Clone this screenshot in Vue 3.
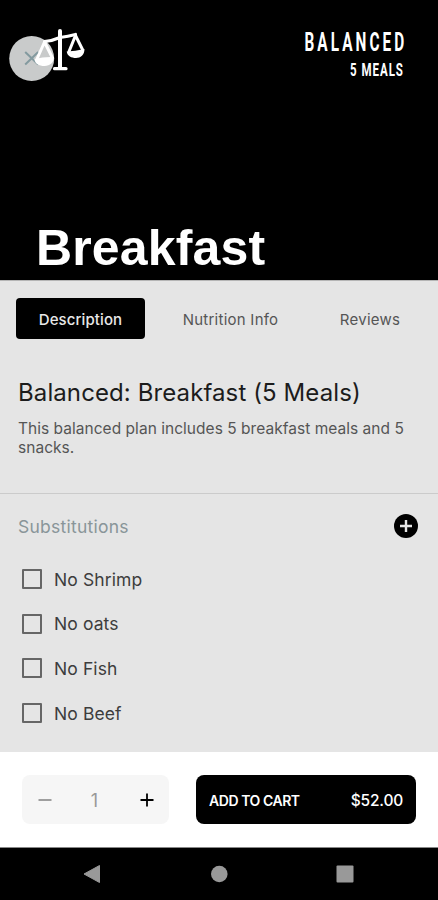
<script setup>
import { ref } from 'vue'

const tabs = ['Description', 'Nutrition Info', 'Reviews']
const activeTab = ref('Description')
const options = ref([
  { label: 'No Shrimp', checked: false },
  { label: 'No oats', checked: false },
  { label: 'No Fish', checked: false },
  { label: 'No Beef', checked: false },
])
const quantity = ref(1)
</script>

<template>
  <main class="screen">
    <header class="hero">
      <div class="hero-top">
        <svg class="brand" width="90" height="66" viewBox="0 0 90 66">
          <circle cx="31.7" cy="38.500" r="22.500" fill="#c9cbcb" />
          <path d="M25.200 32l13 12.500M38.200 32l-13 12.500" stroke="#839a9f" stroke-width="2" fill="none" />
          <g fill="none" stroke="#fff" stroke-width="3" stroke-linecap="round" stroke-linejoin="round">
            <path d="M60 11v37" stroke-width="4" />
            <path d="M54.500 48.700h11.500" stroke-width="3.200" />
            <path d="M44.500 21.500Q52 21 60 17.500Q68 16.500 75.500 14.500" stroke-width="3.200" />
            <path d="M44.500 22l-7.500 17M44.500 22l7.500 15" />
            <path d="M75.500 15.500l-6.500 16M75.500 15.500l7 14" />
          </g>
          <path d="M34.500 39q9.500-2.500 19.500-2c0 5.500-4 9-9.500 9s-10-2.500-10-7z" fill="#fff" />
          <path d="M66.700 31.500q8.500-.5 17.800-2.500c0 6-4 9-8.500 9s-8.800-2-9.300-6.500z" fill="#fff" />
        </svg>
        <div class="plan">
          <span class="plan-name">BALANCED</span>
          <span class="plan-size">5 MEALS</span>
        </div>
      </div>
      <h1>Breakfast</h1>
    </header>

    <section class="details">
      <nav class="tabs">
        <button
          v-for="tab in tabs"
          :key="tab"
          :class="['tab', { active: tab === activeTab }]"
          @click="activeTab = tab"
        >{{ tab }}</button>
      </nav>
      <div class="about">
        <h2>Balanced: Breakfast (5 Meals)</h2>
        <p>This balanced plan includes 5 breakfast meals and 5 snacks.</p>
      </div>
      <div class="subs">
        <div class="subs-head">
          <h3>Substitutions</h3>
          <svg width="24" height="24" viewBox="0 0 24 24">
            <circle cx="12" cy="12" r="12" fill="#000" />
            <path d="M12 6v12M6 12h12" stroke="#e5e5e5" stroke-width="2.400" />
          </svg>
        </div>
        <ul>
          <li v-for="option in options" :key="option.label" @click="option.checked = !option.checked">
            <span :class="['box', { checked: option.checked }]"></span>{{ option.label }}
          </li>
        </ul>
      </div>
    </section>

    <footer class="purchase">
      <div class="stepper">
        <svg width="14" height="14" viewBox="0 0 14 14" @click="quantity = Math.max(1, quantity - 1)">
          <path d="M.5 7h13" stroke="#888" stroke-width="1.600" />
        </svg>
        <span class="quantity">{{ quantity }}</span>
        <svg width="14" height="14" viewBox="0 0 14 14" @click="quantity++">
          <path d="M.5 7h13M7 .5v13" stroke="#000" stroke-width="1.800" />
        </svg>
      </div>
      <button class="cart"><span class="add">ADD TO CART</span><span class="price">$52.00</span></button>
    </footer>

    <div class="system">
      <svg width="18" height="20" viewBox="0 0 18 20"><path d="M1 10L16.500 1.500V18.500z" fill="#999" stroke="#999" stroke-linejoin="round" /></svg>
      <svg width="18" height="18" viewBox="0 0 18 18"><circle cx="9.300" cy="9" r="8.300" fill="#999" /></svg>
      <svg width="18" height="18" viewBox="0 0 18 18"><rect x=".5" y=".5" width="17" height="17" rx="1" fill="#999" /></svg>
    </div>
  </main>
</template>

<style>
body {
  margin: 0;
  background: #000;
}
</style>

<style scoped>
* {
  box-sizing: border-box;
  margin: 0;
  padding: 0;
}
.screen {
  width: 438px;
  height: 900px;
  display: flex;
  flex-direction: column;
  overflow: hidden;
  background: #000;
  color: #222;
  font-family: Inter, Roboto, sans-serif;
}
button {
  border: 0;
  background: none;
  font-family: inherit;
}
svg {
  display: block;
  flex: none;
}
.hero {
  height: 280px;
  flex: none;
  display: flex;
  flex-direction: column;
  justify-content: space-between;
  padding-top: 20px;
  color: #fff;
}
.hero-top {
  display: flex;
  justify-content: space-between;
}
.plan {
  display: flex;
  flex-direction: column;
  align-items: flex-end;
  padding: 7px 31px 0 0;
  font-family: Roboto, sans-serif;
  white-space: nowrap;
}
.plan-name {
  font-size: 26px;
  line-height: 30px;
  font-weight: 700;
  letter-spacing: 5.2px;
  transform: scaleX(0.59);
  transform-origin: right;
}
.plan-size {
  margin-top: 2px;
  padding-right: 5px;
  font-size: 18px;
  line-height: 22px;
  font-weight: 700;
  letter-spacing: 1.5px;
  transform: scaleX(0.64);
  transform-origin: right;
}
h1 {
  padding-left: 36px;
  height: 60px;
  font-family: "Liberation Sans", sans-serif;
  font-size: 50px;
  line-height: 57px;
  font-weight: 700;
  letter-spacing: 0.15px;
}
.details {
  height: 472px;
  flex: none;
  background: #e5e5e5;
  border-top: 1px solid #b5b5b5;
}
.tabs {
  display: grid;
  grid-template-columns: 129px 171px 108px;
  height: 58px;
  padding: 17px 0 0 16px;
}
.tab {
  padding-top: 2px;
  font-size: 15px;
  letter-spacing: 0.25px;
  color: #555;
  height: 41px;
}
.tab.active {
  background: #000;
  color: #e8e8e8;
  border-radius: 4px;
  font-weight: 500;
  letter-spacing: 0.1px;
}
.about {
  height: 155px;
  padding: 39px 18px 0;
  border-bottom: 1px solid #cbcbcb;
}
h2 {
  font-size: 24px;
  line-height: 30px;
  font-weight: 400;
  letter-spacing: 0.1px;
  white-space: nowrap;
  color: #1c1c1c;
}
.about p {
  margin-top: 11px;
  font-size: 15.5px;
  line-height: 19px;
  letter-spacing: 0.03px;
  color: #555;
}
.subs {
  padding: 18px 20px 0 18px;
}
.subs-head {
  display: flex;
  justify-content: space-between;
  align-items: center;
  height: 27px;
}
h3 {
  padding-top: 2px;
  font-size: 17.5px;
  font-weight: 400;
  letter-spacing: 0.25px;
  color: #899599;
}
ul {
  list-style: none;
  margin-top: 18px;
}
li {
  display: flex;
  align-items: center;
  gap: 12px;
  height: 44.6px;
  padding-left: 4px;
  font-size: 17.5px;
  letter-spacing: 0.1px;
  color: #3d3d3d;
}
.box {
  width: 20px;
  height: 20px;
  border: 2px solid #666;
  border-radius: 1px;
}
.box.checked {
  background: #666;
}
.purchase {
  height: 96px;
  flex: none;
  display: flex;
  align-items: flex-start;
  justify-content: space-between;
  padding: 23px 22px 0;
  background: #fff;
  border-bottom: 1px solid #888;
}
.stepper {
  width: 147px;
  height: 49px;
  display: flex;
  align-items: center;
  justify-content: space-between;
  padding: 1px 15px 0 16px;
  border-radius: 8px;
  background: #f6f6f6;
  color: #999;
  font-size: 18px;
}
.quantity {
  padding-right: 3px;
}
.cart {
  width: 220px;
  height: 49px;
  display: flex;
  align-items: center;
  justify-content: space-between;
  padding: 1px 13px 0;
  border-radius: 8px;
  background: #000;
  color: #fff;
}
.add {
  font-size: 14px;
  font-weight: 600;
  letter-spacing: -0.45px;
}
.price {
  font-size: 15.5px;
  font-weight: 500;
  letter-spacing: -0.2px;
}
.system {
  flex: 1;
  display: flex;
  align-items: center;
  justify-content: space-between;
  padding: 0 84px 0 83px;
}
</style>
